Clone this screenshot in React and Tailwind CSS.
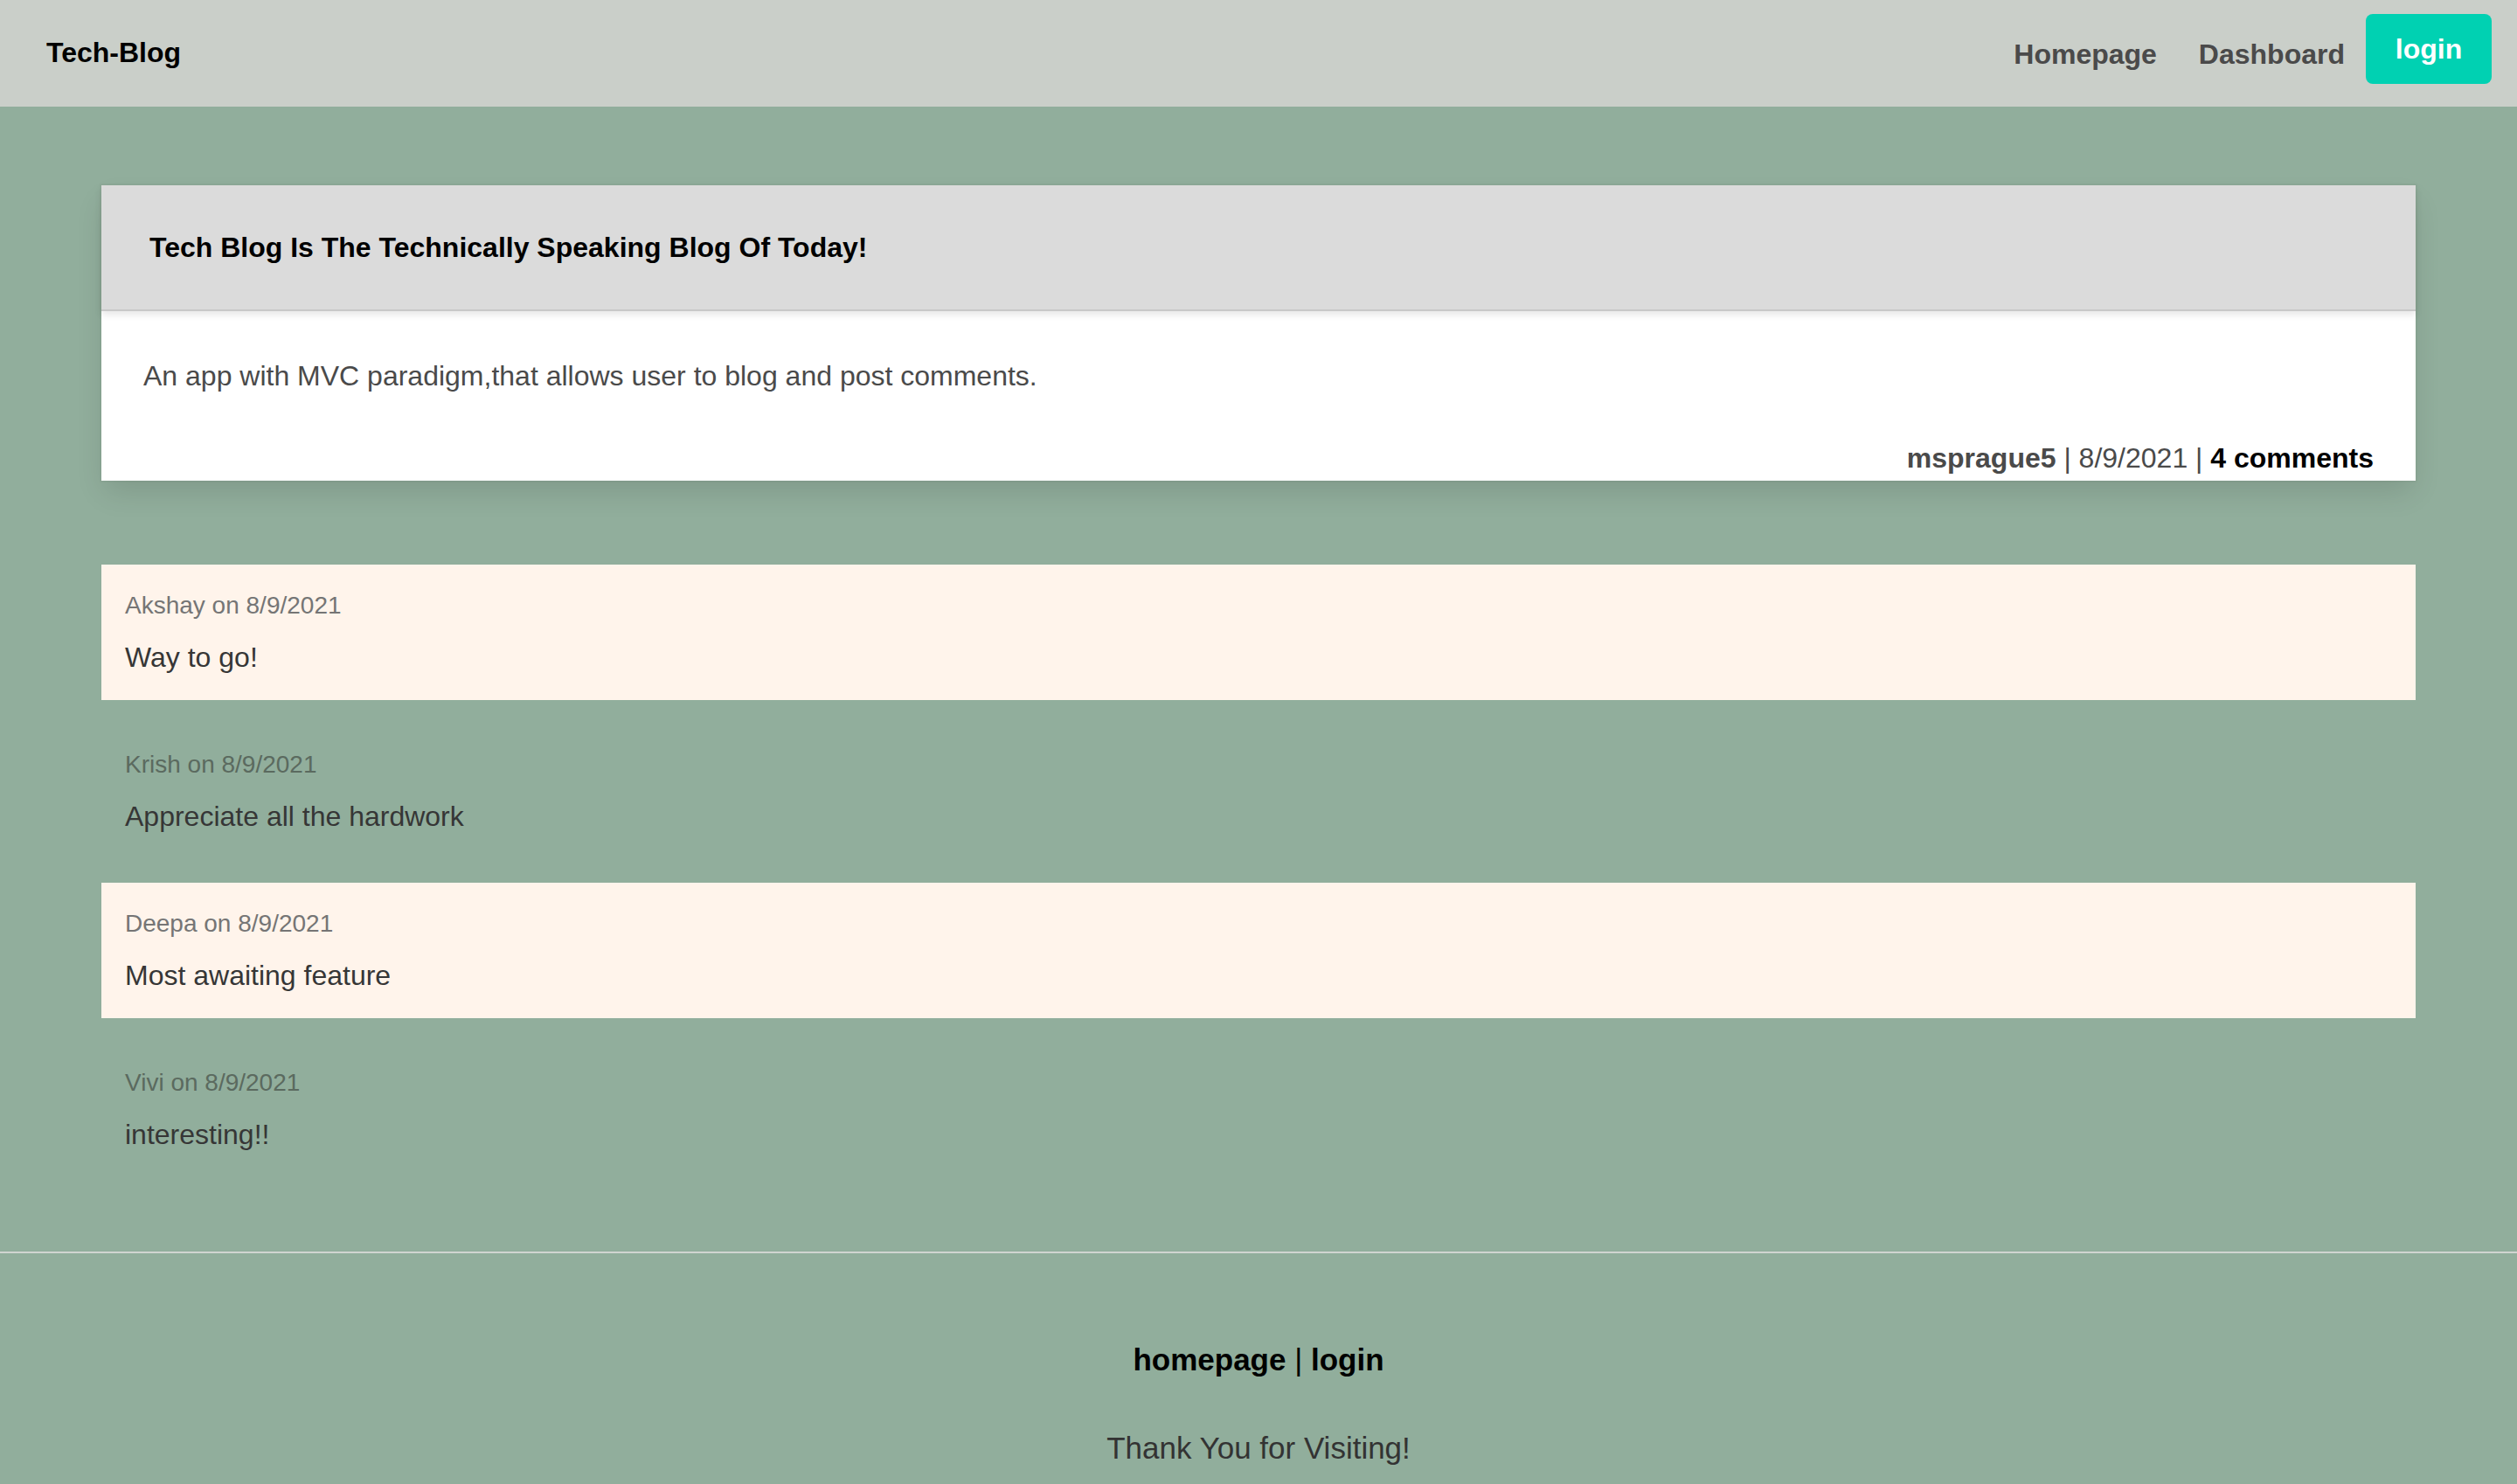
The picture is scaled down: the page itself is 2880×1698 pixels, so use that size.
const comments = [
  { user: "Akshay", date: "8/9/2021", text: "Way to go!" },
  { user: "Krish", date: "8/9/2021", text: "Appreciate all the hardwork" },
  { user: "Deepa", date: "8/9/2021", text: "Most awaiting feature" },
  { user: "Vivi", date: "8/9/2021", text: "interesting!!" },
];

export default function App() {
  return (
    <div className="min-h-screen bg-[#91ae9c] font-['Liberation_Sans',Arial,sans-serif] text-[32px] leading-[1.5] text-[#4a4a4a]">
      {/* Navbar */}
      <header className="flex h-[122px] items-center justify-between bg-[#cacfc9] pl-[53px] pr-[29px]">
        <a className="-mt-[3px] font-bold text-black">Tech-Blog</a>
        <nav className="flex items-start self-start pt-[16px]">
          <a className="mt-[22px] px-[24px] font-bold text-[#4a4a4a]">Homepage</a>
          <a className="mt-[22px] px-[24px] font-bold text-[#4a4a4a]">Dashboard</a>
          <button className="flex h-[80px] w-[144px] items-center justify-center rounded-[8px] bg-[#00d1b2] font-bold text-white">
            login
          </button>
        </nav>
      </header>

      <main className="px-[116px] pt-[90px]">
        {/* Post card */}
        <div className="bg-white shadow-[0_16px_32px_-4px_rgba(10,10,10,0.12),0_0_0_2px_rgba(10,10,10,0.02)]">
          <div className="flex h-[144px] items-center border-b-2 border-[#c8c8c8] bg-[#dbdbdb] pl-[55px] shadow-[0_4px_8px_rgba(10,10,10,0.1)]">
            <h2 className="font-bold text-black">Tech Blog Is The Technically Speaking Blog Of Today!</h2>
          </div>
          <div className="px-[48px] pb-[2px] pt-[50px] pr-[48px]">
            <p className="mb-[46px]">An app with MVC paradigm,that allows user to blog and post comments.</p>
            <p className="text-right">
              <span className="font-bold">msprague5</span> | 8/9/2021 | <span className="font-bold text-black">4 comments</span>
            </p>
          </div>
        </div>

        {/* Comments */}
        <section className="mt-[96px] flex flex-col gap-[27px]">
          {comments.map((c, i) => (
            <div
              key={c.user}
              className={`h-[155px] px-[27px] pt-[26px] ${i % 2 === 0 ? "bg-[#fff4eb]" : ""}`}
            >
              <p className={`mb-[14px] text-[28px] ${i % 2 === 0 ? "text-[#757575]" : "text-[#5b6a5f]"}`}>
                {c.user} on {c.date}
              </p>
              <p className="text-[#363636]">{c.text}</p>
            </div>
          ))}
        </section>
      </main>

      {/* Footer */}
      <footer className="mt-[85px] border-t-2 border-[#d0d4d0] pb-[80px] pt-[96px] text-center text-[35px]">
        <p className="text-black">
          <a className="font-bold">homepage</a> | <a className="font-bold">login</a>
        </p>
        <p className="mt-[48px] text-[#333333]">Thank You for Visiting!</p>
      </footer>
    </div>
  );
}
